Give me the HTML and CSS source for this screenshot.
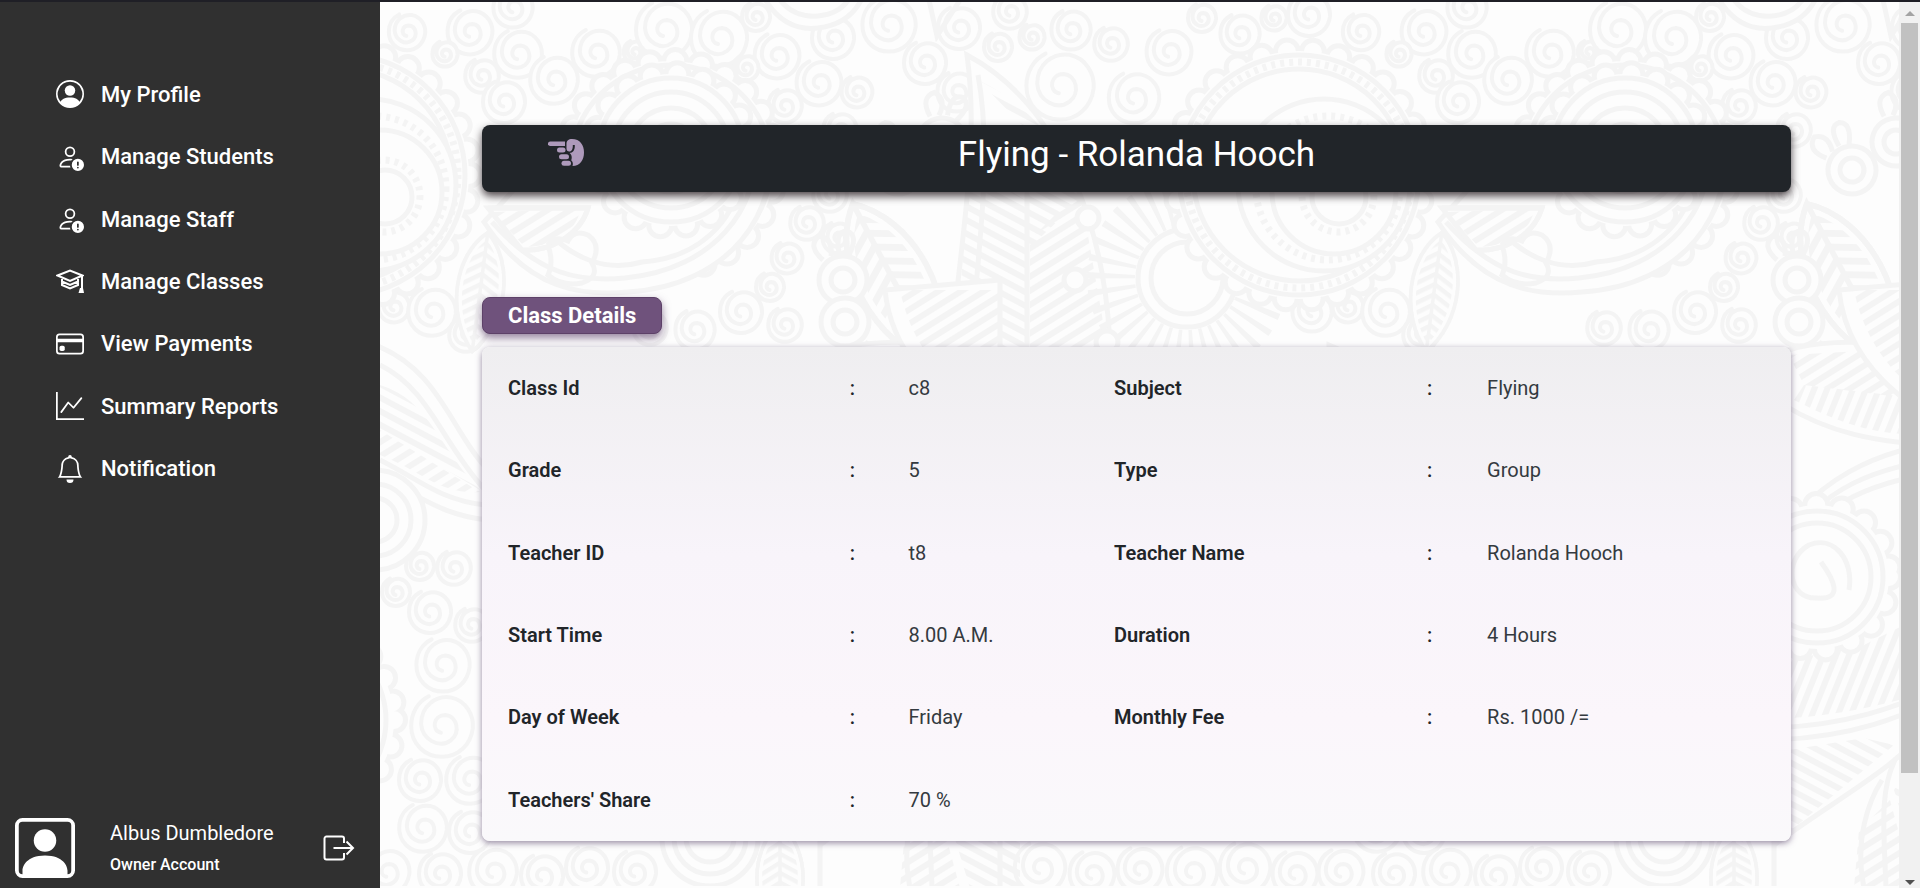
FILE: index.html
```html
<!DOCTYPE html>
<html lang="en">
<head>
<meta charset="utf-8">
<title>Class Details</title>
<meta name="viewport" content="width=device-width, initial-scale=1">
<link rel="stylesheet" href="styles.css">
</head>
<body>
<div class="app">
  <aside class="sidebar">
    <nav aria-label="Main">
      <ul class="nav">
        <li><a href="#"><svg viewBox="0 0 16 16"><path d="M11 6a3 3 0 1 1-6 0 3 3 0 0 1 6 0"/><path fill-rule="evenodd" d="M0 8a8 8 0 1 1 16 0A8 8 0 0 1 0 8m8-7a7 7 0 0 0-5.468 11.37C3.242 11.226 4.805 10 8 10s4.757 1.225 5.468 2.37A7 7 0 0 0 8 1"/></svg>My Profile</a></li>
        <li><a href="#"><svg viewBox="0 0 16 16"><use href="#person-alert"/></svg>Manage Students</a></li>
        <li><a href="#"><svg viewBox="0 0 16 16"><use href="#person-alert"/></svg>Manage Staff</a></li>
        <li><a href="#"><svg viewBox="0 0 28 28" class="line"><path d="M1.500 8.500 14 3.500 26.500 8.500 14 14Z"/><path d="M6 12v2.500l8 3.500 8-3.500V12M6 15.500V18l8 3.500 8-3.500v-2.500M26 9v13"/><path class="solid" d="M24 21h3l1 5h-5.500z"/></svg>Manage Classes</a></li>
        <li><a href="#"><svg viewBox="0 0 16 16"><path d="M0 4a2 2 0 0 1 2-2h12a2 2 0 0 1 2 2v8a2 2 0 0 1-2 2H2a2 2 0 0 1-2-2zm2-1a1 1 0 0 0-1 1v1h14V4a1 1 0 0 0-1-1zm13 4H1v5a1 1 0 0 0 1 1h12a1 1 0 0 0 1-1z"/><path d="M2 10a1 1 0 0 1 1-1h1a1 1 0 0 1 1 1v1a1 1 0 0 1-1 1H3a1 1 0 0 1-1-1z"/></svg>View Payments</a></li>
        <li><a href="#"><svg viewBox="0 0 16 16"><path fill-rule="evenodd" d="M0 0h1v15h15v1H0zm14.817 3.113a.5.5 0 0 1 .07.704l-4.5 5.500a.5.5 0 0 1-.74.037L7.060 6.767l-3.656 5.027a.5.5 0 0 1-.808-.588l4-5.500a.5.5 0 0 1 .758-.06l2.609 2.610 4.150-5.073a.5.5 0 0 1 .704-.07"/></svg>Summary Reports</a></li>
        <li><a href="#"><svg viewBox="0 0 16 16"><path d="M8 16a2 2 0 0 0 2-2H6a2 2 0 0 0 2 2M8 1.918l-.797.161A4 4 0 0 0 4 6c0 .628-.134 2.197-.459 3.742-.16.767-.376 1.566-.663 2.258h10.244c-.287-.692-.502-1.490-.663-2.258C12.134 8.197 12 6.628 12 6a4 4 0 0 0-3.203-3.920zM14.220 12c.223.447.481.801.780 1H1c.299-.199.557-.553.780-1C2.680 10.200 3 6.880 3 6c0-2.420 1.720-4.440 4.005-4.901a1 1 0 1 1 1.990 0A5 5 0 0 1 13 6c0 .880.320 4.200 1.220 6"/></svg>Notification</a></li>
      </ul>
    </nav>
    <div class="account">
      <svg class="avatar" viewBox="0 0 16 16" role="img" aria-label="Profile picture"><path d="M11 6a3 3 0 1 1-6 0 3 3 0 0 1 6 0"/><path d="M2 0a2 2 0 0 0-2 2v12a2 2 0 0 0 2 2h12a2 2 0 0 0 2-2V2a2 2 0 0 0-2-2zm12 1a1 1 0 0 1 1 1v12a1 1 0 0 1-1 1v-1c0-1-1-4-6-4s-6 3-6 4v1a1 1 0 0 1-1-1V2a1 1 0 0 1 1-1z"/></svg>
      <div class="who"><span class="name">Albus Dumbledore</span><span class="role">Owner Account</span></div>
      <button class="logout" type="button" aria-label="Log out"><svg viewBox="0 0 32 26"><path d="M21 8V3.500a2 2 0 0 0-2-2H3.500a2 2 0 0 0-2 2v19a2 2 0 0 0 2 2H19a2 2 0 0 0 2-2V18M10.500 13H30M23.500 6.500 30 13l-6.500 6.500"/></svg></button>
    </div>
  </aside>

  <main class="page">
    <svg class="backdrop" aria-hidden="true">
      <defs>
        <path id="sp" d="M-1 6C-10 4-8-10 3-10 14-9 17 6 8 13-3 21-18 12-19-2-19-18-6-28 8-26 22-23 29-10 28 2 26 18 14 28 0 28-16 28-28 16-28 0-28-12-22-22-12-27"/>
        <pattern id="ha" width="12" height="12" patternUnits="userSpaceOnUse" patternTransform="rotate(28)"><rect width="12" height="6"/></pattern>
        <pattern id="hb" width="12" height="12" patternUnits="userSpaceOnUse" patternTransform="rotate(-32)"><rect width="12" height="6"/></pattern>
        <pattern id="hc" width="12" height="12" patternUnits="userSpaceOnUse" patternTransform="rotate(-68)"><rect width="12" height="6"/></pattern>
        <g id="leaf"><path class="plain" d="M0-80C44-44 44 36 0 80-44 36-44-44 0-80"/><path class="ha" d="M0-70C34-40 34 30 0 70Z"/><path class="hb" d="M0-70C-34-40-34 30 0 70Z"/><path d="M0-80C44-44 44 36 0 80-44 36-44-44 0-80V80"/></g>
        <g id="flower"><path d="M-20-20q-16-14-4-24 14 2 12 20M-4-27q-4-22 8-22 12 4 2 24"/><circle r="24"/><circle r="12"/></g>
        <g id="tile">
          <use href="#sp" transform="translate(27 32) scale(.65)"/><use href="#sp" transform="translate(90 32) scale(.8)"/><use href="#sp" transform="translate(133 8) scale(.7)"/><use href="#sp" transform="translate(65 54) scale(.45)"/><use href="#sp" transform="translate(138 54) scale(.85)"/><use href="#sp" transform="translate(102 76) scale(.6)"/><use href="#sp" transform="translate(216 53) scale(.85)"/><use href="#sp" transform="translate(174 80) scale(.85)"/><use href="#sp" transform="translate(124 102) scale(.75)"/><use href="#sp" transform="translate(255 52) scale(.4)"/><use href="#sp" transform="translate(284 30) scale(1)"/><use href="#sp" transform="translate(339 38) scale(1)"/><use href="#sp" transform="translate(376 17) scale(.5)"/><use href="#sp" transform="translate(397 56) scale(.8)"/><use href="#sp" transform="translate(366 68) scale(.45)"/><use href="#sp" transform="translate(453 38) scale(.75)"/><use href="#sp" transform="translate(439 83) scale(.8)"/><use href="#sp" transform="translate(477 92) scale(.55)"/><use href="#sp" transform="translate(509 25) scale(.95)"/><use href="#sp" transform="translate(545 63) scale(.75)"/><use href="#sp" transform="translate(577 92) scale(.7)"/><use href="#sp" transform="translate(405 106) scale(.6)"/><use href="#sp" transform="translate(579 28) scale(.75)"/><use href="#sp" transform="translate(630 12) scale(.6)"/><use href="#sp" transform="translate(618 47) scale(.5)"/><use href="#sp" transform="translate(652 37) scale(.45)"/><use href="#sp" transform="translate(691 30) scale(.7)"/><use href="#sp" transform="translate(731 44) scale(.6)"/><use href="#sp" transform="translate(680 86) scale(1.200)"/><use href="#sp" transform="translate(754 98) scale(.9)"/><use href="#sp" transform="translate(789 52) scale(.8)"/><use href="#sp" transform="translate(822 18) scale(.5)"/><use href="#sp" transform="translate(860 34) scale(.7)"/><use href="#sp" transform="translate(929 15) scale(.75)"/><use href="#sp" transform="translate(894 18) scale(.45)"/>
          <use href="#sp" transform="translate(427 223) scale(.6)"/><use href="#sp" transform="translate(458 238) scale(.55)"/><use href="#sp" transform="translate(407 258) scale(.55)"/><use href="#sp" transform="translate(390 287) scale(.5)"/><use href="#sp" transform="translate(361 312) scale(.75)"/><use href="#sp" transform="translate(315 330) scale(.7)"/><use href="#sp" transform="translate(270 328) scale(.6)"/><use href="#sp" transform="translate(405 325) scale(.6)"/><use href="#sp" transform="translate(14 307) scale(.55)"/><use href="#sp" transform="translate(52 312) scale(.85)"/><use href="#sp" transform="translate(932 312) scale(.7)"/><use href="#sp" transform="translate(86 335) scale(.6)"/><use href="#sp" transform="translate(460 130) scale(.6)"/><use href="#sp" transform="translate(425 140) scale(.5)"/><use href="#sp" transform="translate(450 195) scale(.6)"/>
          <use href="#sp" transform="translate(40 566) scale(.5)"/><use href="#sp" transform="translate(74 568) scale(.6)"/><use href="#sp" transform="translate(16 592) scale(.5)"/><use href="#sp" transform="translate(50 612) scale(.75)"/><use href="#sp" transform="translate(92 625) scale(.6)"/><use href="#sp" transform="translate(63 665) scale(.95)"/><use href="#sp" transform="translate(62 726) scale(1.100)"/><use href="#sp" transform="translate(40 780) scale(.75)"/><use href="#sp" transform="translate(90 780) scale(.85)"/><use href="#sp" transform="translate(43 828) scale(.85)"/><use href="#sp" transform="translate(90 832) scale(.75)"/><use href="#sp" transform="translate(7 872) scale(.8)"/><use href="#sp" transform="translate(60 874) scale(.75)"/><use href="#sp" transform="translate(113 872) scale(.85)"/><use href="#sp" transform="translate(162 876) scale(.75)"/><use href="#sp" transform="translate(207 868) scale(.75)"/><use href="#sp" transform="translate(255 872) scale(.75)"/><use href="#sp" transform="translate(660 868) scale(.9)"/><use href="#sp" transform="translate(712 874) scale(.8)"/><use href="#sp" transform="translate(760 870) scale(.8)"/><use href="#sp" transform="translate(812 872) scale(.9)"/><use href="#sp" transform="translate(865 868) scale(.9)"/><use href="#sp" transform="translate(915 874) scale(.8)"/>

          <circle class="scallop" cx="-35" cy="175" r="124"/><circle class="eyelet" cx="-35" cy="175" r="124"/>
          <circle cx="-35" cy="175" r="120"/><circle class="dots" cx="-35" cy="175" r="113"/><circle cx="-35" cy="175" r="106"/><circle cx="-10" cy="185" r="86"/><circle class="dots" cx="-6" cy="188" r="72"/><circle cx="0" cy="192" r="62"/><circle class="dots" cx="4" cy="196" r="36"/><circle cx="5" cy="197" r="27"/>
          <circle class="scallop" cx="291" cy="165" r="104"/><circle class="eyelet" cx="291" cy="165" r="104"/>
          <circle cx="291" cy="165" r="100"/>
          <path class="plain" d="M104 222C150 292 205 296 248 292 350 286 402 210 388 140H180Z"/><path d="M112 222C160 276 200 282 245 278 335 270 380 205 374 150M150 210C190 268 235 270 262 262 320 258 354 220 360 180"/>
          <circle class="scallop" cx="291" cy="150" r="76"/><circle class="eyelet" cx="291" cy="150" r="76"/>
          <circle cx="291" cy="150" r="72"/><circle cx="291" cy="150" r="58"/><circle cx="291" cy="150" r="42"/><circle cx="291" cy="150" r="26"/>
          <path class="plain" d="M108 208H208C200 235 170 252 142 250Z"/><path class="hb" d="M112 212 200 209C198 235 160 250 144 246Z"/><path d="M108 208H208C200 235 170 252 142 250"/>
          <path d="M168 245q6 18 0 30 14 12 34 8 18-6 10-20 10-18-4-28-14-6-20 6-14-6-20 4"/>
          <use href="#leaf" transform="translate(100 292) scale(.7 .75) rotate(8)"/>
          <path class="plain" d="M587 55C600 150 580 240 570 360H730C730 250 690 110 587 55Z"/><path class="ha" d="M598 80C660 110 690 160 700 200L647 250V130Z"/><path class="ha" d="M590 165 645 200V360H575Z"/><path class="hb" d="M650 240 700 190 728 350H650Z"/><path d="M598 75C612 150 600 240 590 350M647 140V360"/>
          <use href="#leaf" transform="translate(516 285) rotate(-28) scale(1.100 1.150)"/>
          <circle class="rays" cx="807" cy="278" r="76"/><circle cx="807" cy="278" r="49"/><circle cx="807" cy="278" r="36"/>
          <circle cx="708" cy="218" r="11"/><circle cx="695" cy="280" r="11"/><circle cx="727" cy="342" r="11"/><circle cx="898" cy="208" r="11"/><circle cx="916" cy="274" r="11"/>
          <use href="#flower" transform="translate(463 280)"/><use href="#flower" transform="translate(465 322) rotate(180)"/>
          <use href="#flower" transform="translate(518 170) rotate(-20)"/><use href="#flower" transform="translate(562 142) rotate(20)"/>
          <path class="plain" d="M382-6q20 38 56 34 34-4 46-34"/><path d="M396-6q14 24 42 22 24-2 34-22M549 0 557 36 580 0"/>

          <path class="plain" d="M-5 345C60 370 70 430 108 470V520C60 515 40 495-5 475Z"/><path d="M0 365C50 390 60 440 105 490M0 460C40 480 60 500 105 505"/><path class="ha" d="M0 385C50 400 60 450 100 490L0 430Z"/><path class="hb" d="M0 430 100 492C60 495 40 470 0 455Z"/>
          <circle cx="-5" cy="520" r="50"/><circle cx="-5" cy="520" r="36"/><circle cx="-5" cy="520" r="22"/>
          <circle class="scallop" cx="-80" cy="720" r="94"/><circle class="eyelet" cx="-80" cy="720" r="94"/><circle cx="-80" cy="720" r="86"/>

          <path class="plain" d="M440 545C480 480 540 450 620 440V720C550 725 500 735 440 735Z"/>
          <path d="M446 550C490 485 540 468 620 456M446 562C490 500 540 480 620 470"/>
          <path class="plain" d="M455 350C480 342 520 340 555 345L620 395V445C540 445 490 430 450 405Z"/>
          <path class="hb" d="M455 355 545 350 590 400 470 385Z"/><path class="hc" d="M470 385 600 400V434C540 438 500 420 460 400Z"/>
          <path class="plain" d="M505 290C510 340 540 390 620 430V280Z"/><path class="hb" d="M520 290C530 340 560 385 620 415V290Z"/>
          <path class="hc" d="M455 660 530 645 600 610V690Q520 715 455 718Z"/>
          <circle class="scallop" cx="483" cy="577" r="72"/><circle class="eyelet" cx="483" cy="577" r="72"/><circle cx="483" cy="577" r="66"/><circle cx="483" cy="577" r="54"/>
          <path d="M487 562C500 580 510 600 483 598 455 600 448 560 475 545 500 535 520 560 515 590"/>
          <path class="plain" d="M440 728C510 725 560 710 620 680V900H440Z"/><path d="M440 740C520 737 565 718 620 692"/>
          <path class="ha" d="M455 750 530 738 560 745 455 832Z"/><path d="M440 845C500 800 560 770 590 730M552 888C550 830 545 790 562 758M530 888C520 840 535 800 548 780"/>
          <path class="ha" d="M600 735 560 790 590 888H640V735Z"/><path class="hb" d="M556 800 525 830 520 888H580Z"/>
          <circle cx="330" cy="838" r="48"/><circle cx="330" cy="838" r="36"/><circle cx="330" cy="838" r="24"/>
          <use href="#leaf" transform="translate(400 880) scale(.7)"/>
        </g>
        <g id="person-alert" stroke="none"><path d="M11 5a3 3 0 1 1-6 0 3 3 0 0 1 6 0M8 7a2 2 0 1 0 0-4 2 2 0 0 0 0 4m.256 7a4.500 4.500 0 0 1-.229-1.004H3c.001-.246.154-.986.832-1.664C4.484 10.680 5.711 10 8 10q.39 0 .740.025c.226-.341.496-.65.804-.918Q8.844 9.002 8 9c-5 0-6 3-6 4s1 1 1 1z"/><path d="M16 12.500a3.500 3.500 0 1 1-7 0 3.500 3.500 0 0 1 7 0m-3.500-2a.5.5 0 0 0-.5.5v1.500a.5.5 0 0 0 1 0V11a.5.5 0 0 0-.5-.5m0 4a.5.5 0 1 0 0-1 .5.5 0 0 0 0 1"/></g>
      </defs>
      <use href="#tile"/><use href="#tile" x="954"/>
    </svg>

    <div class="content">
      <header class="banner">
        <a class="back" href="#" aria-label="Back"><svg viewBox="0 0 36 27"><path d="M2.200 2.500H17V7H2.200a2.200 2.200 0 0 1 0-4.500Z"/><rect x="9" y="8.500" width="8.500" height="5" rx="2.500"/><rect x="11" y="15.200" width="10" height="5" rx="2.500"/><rect x="13.500" y="21.800" width="9.500" height="5" rx="2.500"/><path d="M24 0C32 0 36 6 36 13.500S32 27 24.500 27c.8-2 .5-4.500-1.300-5.800C24.500 18.500 23.500 15 21.500 14c3.500-.3 5.500-2.500 5.300-8h-2c.2 4-1 6.500-3.500 6.500-1.800 0-2.800-1.300-2.800-3V5C18.500 1.500 20.500 0 24 0Z"/></svg></a>
        <h1>Flying - Rolanda Hooch</h1>
      </header>

      <section>
        <h2 class="tag">Class Details</h2>
        <table class="details">
          <tbody>
            <tr><th scope="row">Class Id</th><td>:</td><td>c8</td><th scope="row">Subject</th><td>:</td><td>Flying</td></tr>
            <tr><th scope="row">Grade</th><td>:</td><td>5</td><th scope="row">Type</th><td>:</td><td>Group</td></tr>
            <tr><th scope="row">Teacher ID</th><td>:</td><td>t8</td><th scope="row">Teacher Name</th><td>:</td><td>Rolanda Hooch</td></tr>
            <tr><th scope="row">Start Time</th><td>:</td><td>8.00 A.M.</td><th scope="row">Duration</th><td>:</td><td>4 Hours</td></tr>
            <tr><th scope="row">Day of Week</th><td>:</td><td>Friday</td><th scope="row">Monthly Fee</th><td>:</td><td>Rs. 1000 /=</td></tr>
            <tr><th scope="row">Teachers' Share</th><td>:</td><td>70 %</td><td></td><td></td><td></td></tr>
          </tbody>
        </table>
      </section>
    </div>
  </main>

  <div class="scrollbar" aria-hidden="true">
    <span class="arrow up"></span><span class="track"><span class="thumb"></span></span><span class="arrow down"></span>
  </div>
</div>
</body>
</html>
```
FILE: styles.css
```css
* { box-sizing: border-box; }

body {
  margin: 0;
  font-family: Roboto, "Liberation Sans", sans-serif;
  color: #212529;
  background: #fdfdfd;
}

.app {
  display: flex;
  min-height: 100vh;
  border-top: 2px solid #1f1f26;
}

/* Sidebar */
.sidebar {
  flex: none;
  width: 380px;
  display: flex;
  flex-direction: column;
  justify-content: space-between;
  padding-top: 61px;
  background: #303030;
  color: #fff;
}

.nav {
  display: grid;
  grid-auto-rows: 1fr;
  height: 437px;
  margin: 0;
  padding: 0 0 0 56px;
  list-style: none;
}

.nav a {
  display: flex;
  align-items: center;
  gap: 17px;
  height: 100%;
  color: inherit;
  font-size: 22px;
  font-weight: 500;
  text-decoration: none;
}

.nav svg {
  width: 28px;
  height: 28px;
  fill: currentColor;
}

.nav svg.line {
  fill: none;
  stroke: currentColor;
  stroke-width: 2;
}

.nav .solid {
  fill: currentColor;
  stroke: none;
}

.account {
  display: flex;
  align-items: center;
  padding: 0 25px 10px 15px;
}

.avatar {
  width: 60px;
  height: 60px;
  fill: currentColor;
}

.who {
  display: flex;
  flex-direction: column;
  gap: 9px;
  margin: 0 auto 0 35px;
}

.name { font-size: 20px; line-height: 24px; }
.role { font-size: 16px; font-weight: 500; line-height: 22px; }

.logout {
  padding: 0;
  border: 0;
  background: none;
  color: inherit;
}

.logout svg {
  display: block;
  width: 32px;
  height: 26px;
  fill: none;
  stroke: currentColor;
  stroke-width: 2;
}

/* Page */
.page {
  position: relative;
  flex: 1;
  min-width: 0;
  overflow: hidden;
}

.backdrop {
  position: absolute;
  inset: -2px 0 0;
  width: 100%;
  height: 100%;
  fill: none;
  stroke: #f4f4f4;
  stroke-width: 5;
}

.backdrop pattern { fill: #f4f4f4; stroke: none; }
.backdrop circle,
.plain { fill: #fdfdfd; }
.ha { fill: url(#ha); stroke: none; }
.hb { fill: url(#hb); stroke: none; }
.hc { fill: url(#hc); stroke: none; }
.dots { stroke-width: 7; stroke-dasharray: 4 5; }
.scallop { stroke-width: 28; stroke-linecap: round; stroke-dasharray: 0 26; }
.eyelet { stroke: #fdfdfd; stroke-width: 18; stroke-linecap: round; stroke-dasharray: 0 26; }
.rays { stroke-width: 48; stroke-dasharray: 5 9; }
#sp { fill: #fdfdfd; stroke-width: 4; stroke-linecap: round; vector-effect: non-scaling-stroke; }
#person-alert { fill: #fff; }

.content {
  position: relative;
  padding: 123px 108px 47px 102px;
}

.banner {
  position: relative;
  height: 67px;
  border-radius: 8px;
  background: #212529;
  color: #fff;
  box-shadow: 0 4px 8px rgba(30, 20, 25, .8);
}

.banner h1 {
  margin: 0;
  font-size: 35px;
  font-weight: 400;
  line-height: 60px;
  text-align: center;
}

.back {
  position: absolute;
  top: 14px;
  left: 66px;
  color: #ae9abb;
}

.back svg {
  display: block;
  width: 36px;
  height: 27px;
  fill: currentColor;
}

.tag {
  width: fit-content;
  margin: 105px 0 13px;
  padding: 0 25px;
  border: 1px solid #5d4168;
  border-radius: 8px;
  background: #6f527c;
  color: #fff;
  font-size: 22px;
  line-height: 35px;
  box-shadow: 0 4px 8px rgba(80, 50, 95, .6);
}

.details {
  width: 100%;
  height: 494px;
  table-layout: fixed;
  border-spacing: 0;
  border-radius: 8px;
  background: linear-gradient(#efeef0, #f8f4fa 42%, #fbf6fb 75%, #faf9fb);
  box-shadow: 0 2px 6px rgba(80, 60, 100, .6);
}

.details th,
.details td {
  padding: 0 0 0 26px;
  font-size: 20px;
  font-weight: 400;
  text-align: left;
}

.details th { font-weight: 600; }
.details td:nth-child(2),
.details td:nth-child(5) { font-weight: 500; }
.details th:nth-child(1) { width: 26.1%; }
.details td:nth-child(2) { width: 4.5%; }
.details td:nth-child(3) { width: 15.7%; }
.details th:nth-child(4) { width: 23.9%; }
.details td:nth-child(5) { width: 4.6%; }
.details td:nth-child(3),
.details td:nth-child(6) { color: #343a40; }

/* Scrollbar */
.scrollbar {
  flex: none;
  width: 21px;
  display: flex;
  flex-direction: column;
  align-items: center;
  padding: 9px 0 3px;
  background: #f1f1f1;
}

.arrow {
  border: 5px solid transparent;
}

.arrow.up { border-top: 0; border-bottom-color: #a3a3a3; }
.arrow.down { border-bottom: 0; border-top-color: #505050; }

.track {
  flex: 1;
  width: 17px;
  padding: 7px 0 5px;
}

.thumb {
  display: block;
  height: 88%;
  background: #c1c1c1;
}
```
